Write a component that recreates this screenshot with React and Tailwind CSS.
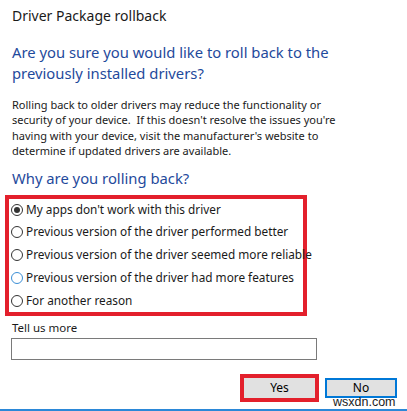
import React from 'react';

const reasons = [
  { label: "My apps don't work with this driver", state: 'checked' },
  { label: 'Previous version of the driver performed better', state: 'off' },
  { label: 'Previous version of the driver seemed more reliable', state: 'off' },
  { label: 'Previous version of the driver had more features', state: 'hover' },
  { label: 'For another reason', state: 'off' },
];

const Radio = ({ state }) => {
  // plain win10 radio circle
  const ring = state === 'hover' ? 'border-[#3b8fd6]' : 'border-[#333333]';
  return (
    <span className={`w-[12px] h-[12px] rounded-full border bg-white flex items-center justify-center flex-none ${ring}`}>
      {state === 'checked' && <span className="w-[6px] h-[6px] rounded-full bg-[#333333]" />}
    </span>
  );
};

const App = () => {
  return (
    <div className="relative w-[407px] h-[411px] bg-white overflow-hidden text-[#1a1a1a] font-['Noto_Sans','Open_Sans',sans-serif]">
      {/* Title */}
      <div className="pt-[8px] pl-[12px] text-[14px] leading-[16px] whitespace-nowrap">Driver Package rollback</div>

      {/* Main instruction */}
      <h1 className="mt-[18px] ml-[12px] text-[14.8px] leading-[21px] text-[#1f4a9c] whitespace-nowrap">
        Are you sure you would like to roll back to the<br />previously installed drivers?
      </h1>

      <p className="mt-[13px] ml-[12px] text-[11px] leading-[15.3px] whitespace-nowrap">
        Rolling back to older drivers may reduce the functionality or<br />
        security of your device.&nbsp; If this doesn't resolve the issues you're<br />
        having with your device, visit the manufacturer's website to<br />
        determine if updated drivers are available.
      </p>

      <h2 className="mt-[9px] ml-[12px] text-[14.8px] leading-[22px] text-[#1f4a9c] whitespace-nowrap">Why are you rolling back?</h2>

      {/* Reasons, highlighted */}
      <div className="mt-[6px] ml-[5px] w-[302px] h-[121px] border-4 border-[#e3202c]">
        <div className="-mt-[1px] flex flex-col">
          {reasons.map((r, i) => (
            <label key={i} className="h-[22.75px] flex items-center gap-[3px] pl-[2px] text-[11.8px] whitespace-nowrap">
              <Radio state={r.state} />
              <span>{r.label}</span>
            </label>
          ))}
        </div>
      </div>

      {/* Tell us more */}
      <div className="mt-[3px] ml-[12px] text-[11.5px] leading-[18px]">Tell us more</div>
      <div className="mt-[1px] ml-[11px] w-[306px] h-[22px] border border-[#7a7a7a]" />

      {/* Buttons */}
      <div className="mt-[14px] flex items-start">
        <div className="ml-[240px] w-[79px] h-[28px] border-4 border-[#e3202c] flex-none">
          <div className="w-full h-full bg-[#e1e1e1] text-[12px] leading-[20px] text-black text-center">Yes</div>
        </div>
        <div className="ml-[6px] mt-[4px] w-[72px] h-[20px] border-2 border-[#0078d7] bg-[#e1e1e1] text-[12px] leading-[16px] text-black text-center flex-none">No</div>
      </div>

      {/* bottom accent */}
      <div className="absolute left-0 right-0 bottom-0 h-[2px] bg-[#2b88d8]" />

      {/* watermark */}
      <span className="absolute left-[333px] top-[396px] text-[12.5px] leading-[12px] text-[#222222] font-['Liberation_Sans',sans-serif]">wsxdn.com</span>
    </div>
  );
};

export default App;
